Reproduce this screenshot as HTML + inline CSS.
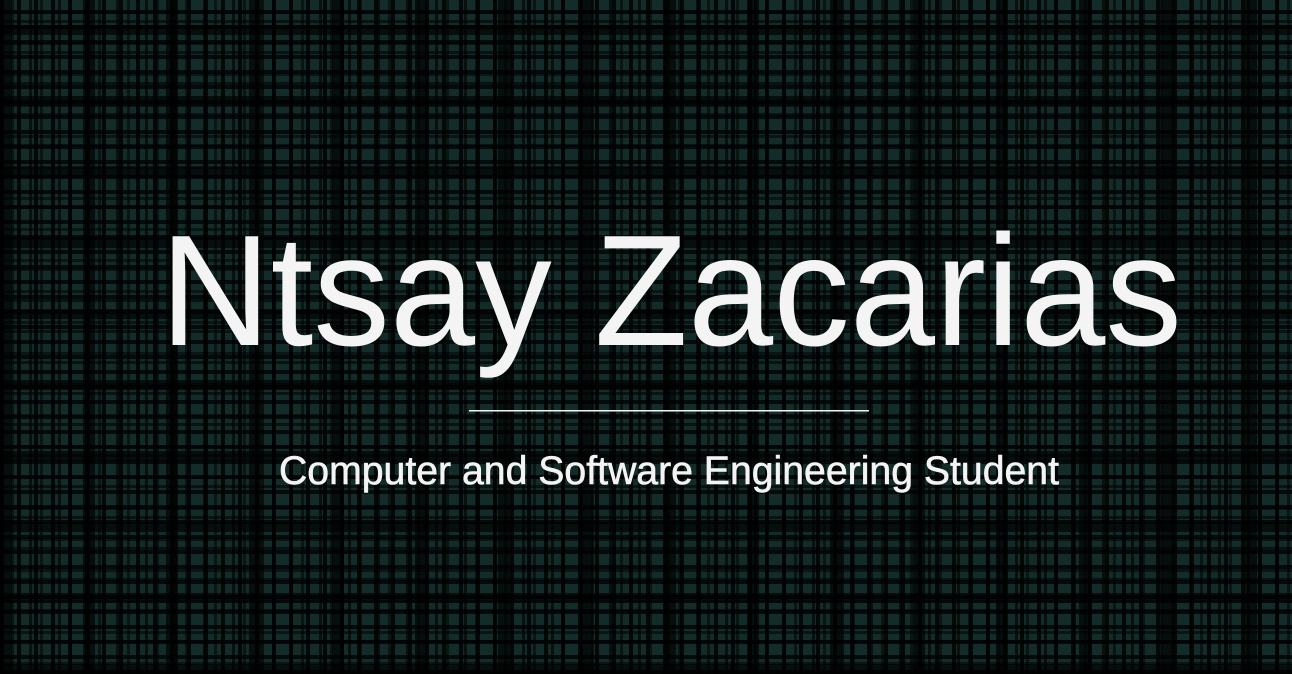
<!DOCTYPE html>
<html><head><style>
html,body{margin:0;padding:0;}
body{width:1292px;height:674px;overflow:hidden;position:relative;
background-color:#132b29;
background-image:
repeating-linear-gradient(90deg, rgba(0,0,0,.8) 0 4px, transparent 4px 17px),
repeating-linear-gradient(90deg, rgba(0,0,0,.6) 0 3px, transparent 3px 11px, rgba(0,0,0,.5) 11px 14px, transparent 14px 29px),
repeating-linear-gradient(90deg, rgba(0,0,0,.65) 0 12px, transparent 12px 83px),
repeating-linear-gradient(0deg, rgba(0,0,0,.75) 0 4px, transparent 4px 15px),
repeating-linear-gradient(0deg, rgba(0,0,0,.55) 0 3px, transparent 3px 9px, rgba(0,0,0,.5) 9px 12px, transparent 12px 31px),
repeating-linear-gradient(0deg, rgba(0,0,0,.65) 0 10px, transparent 10px 71px);
}
svg{position:absolute;left:0;top:0;}
</style></head><body>
<svg width="1292" height="674" viewBox="0 0 1292 674">
<text x="160" y="345" font-family="Liberation Sans, sans-serif" font-size="158" fill="#f4f4f4" textLength="1022" lengthAdjust="spacingAndGlyphs">Ntsay Zacarias</text>
<rect x="469" y="410" width="400" height="1.5" fill="#f4f4f4"/>
<text x="279" y="484" font-family="Liberation Sans, sans-serif" font-size="40" fill="#f4f4f4" stroke="#f4f4f4" stroke-width="0.6" textLength="780" lengthAdjust="spacingAndGlyphs">Computer and Software Engineering Student</text>
</svg>
</body></html>
